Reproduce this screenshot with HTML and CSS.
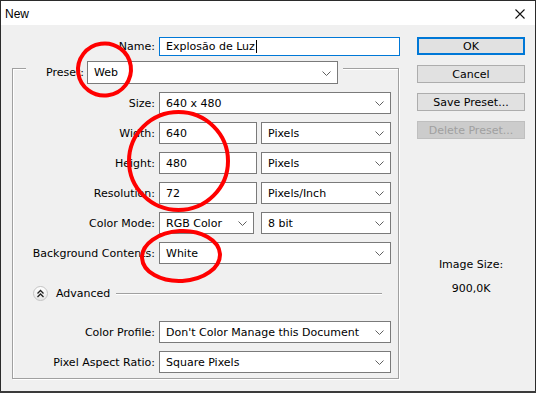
FILE: index.html
```html
<!DOCTYPE html>
<html lang="pt">
<head>
  <meta charset="UTF-8">
  <title>New</title>
  <link rel="stylesheet" href="styles.css">
</head>
<body>

  <div class="window">
    <div class="titlebar">
      <span class="title">New</span>
      <svg class="close" width="10" height="10" viewBox="0 0 10 10">
        <path d="M0.5 0.5 L9.5 9.5 M9.5 0.5 L0.5 9.5" stroke="#111" stroke-width="1.1" fill="none"/>
      </svg>
    </div>

    <div class="content">
      <div class="main">
        <div class="name-row">
          <label class="label">Name:</label>
          <div class="field name-field">Explosão de Luz<span class="caret"></span></div>
        </div>

        <div class="group">
          <div class="preset-row">
            <label class="preset-label">Preset:</label>
            <div class="select preset-select"><span>Web</span><svg class="chev" width="9" height="5"><polyline points="0.5,0.5 4.5,4.5 8.5,0.5"/></svg></div>
          </div>

          <div class="row">
            <label class="label">Size:</label>
            <div class="select wide"><span>640 x 480</span><svg class="chev" width="9" height="5"><polyline points="0.5,0.5 4.5,4.5 8.5,0.5"/></svg></div>
          </div>

          <div class="row">
            <label class="label">Width:</label>
            <div class="field num">640</div>
            <div class="select unit"><span>Pixels</span><svg class="chev" width="9" height="5"><polyline points="0.5,0.5 4.5,4.5 8.5,0.5"/></svg></div>
          </div>

          <div class="row">
            <label class="label">Height:</label>
            <div class="field num">480</div>
            <div class="select unit"><span>Pixels</span><svg class="chev" width="9" height="5"><polyline points="0.5,0.5 4.5,4.5 8.5,0.5"/></svg></div>
          </div>

          <div class="row">
            <label class="label">Resolution:</label>
            <div class="field num">72</div>
            <div class="select unit"><span>Pixels/Inch</span><svg class="chev" width="9" height="5"><polyline points="0.5,0.5 4.5,4.5 8.5,0.5"/></svg></div>
          </div>

          <div class="row">
            <label class="label">Color Mode:</label>
            <div class="select mode"><span>RGB Color</span><svg class="chev" width="9" height="5"><polyline points="0.5,0.5 4.5,4.5 8.5,0.5"/></svg></div>
            <div class="select unit"><span>8 bit</span><svg class="chev" width="9" height="5"><polyline points="0.5,0.5 4.5,4.5 8.5,0.5"/></svg></div>
          </div>

          <div class="row">
            <label class="label">Background Contents:</label>
            <div class="select wide"><span>White</span><svg class="chev" width="9" height="5"><polyline points="0.5,0.5 4.5,4.5 8.5,0.5"/></svg></div>
          </div>

          <div class="advanced-row">
            <div class="toggle">
              <svg width="9" height="9" viewBox="0 0 9 9">
                <polyline points="1.5,4.5 4.5,1.5 7.5,4.5" />
                <polyline points="1.5,8 4.5,5 7.5,8" />
              </svg>
            </div>
            <span class="advanced-text">Advanced</span>
            <div class="advanced-line"></div>
          </div>

          <div class="row profile">
            <label class="label">Color Profile:</label>
            <div class="select wide"><span>Don't Color Manage this Document</span><svg class="chev" width="9" height="5"><polyline points="0.5,0.5 4.5,4.5 8.5,0.5"/></svg></div>
          </div>

          <div class="row">
            <label class="label">Pixel Aspect Ratio:</label>
            <div class="select wide"><span>Square Pixels</span><svg class="chev" width="9" height="5"><polyline points="0.5,0.5 4.5,4.5 8.5,0.5"/></svg></div>
          </div>
        </div>
      </div>

      <div class="side">
        <button class="btn default">OK</button>
        <button class="btn">Cancel</button>
        <button class="btn">Save Preset...</button>
        <button class="btn" disabled>Delete Preset...</button>

        <div class="image-size">Image Size:</div>
        <div class="image-value">900,0K</div>
      </div>
    </div>

    <!-- red marker circles drawn on top of the screenshot -->
    <svg class="marks" width="536" height="393">
      <ellipse cx="104.5" cy="69.5" rx="26.5" ry="26" transform="rotate(-8 104.5 69.5)"/>
      <ellipse cx="178.5" cy="161" rx="49.5" ry="49"/>
      <ellipse cx="181" cy="256" rx="39" ry="25" transform="rotate(-3 181 256)"/>
    </svg>
  </div>

</body>
</html>
```

FILE: styles.css
```css
body {
  margin: 0;
  background: #3b3b3b;
  font-family: "DejaVu Sans", sans-serif;
  font-size: 11px;
  color: #000;
  width: 536px;
  height: 393px;
  overflow: hidden;
}

.window {
  position: relative;
  width: 536px;
  height: 391px;
  box-sizing: border-box;
  border: 1px solid #2b2b2b;
  border-bottom: none;
  background: #f0f0f0;
}

.titlebar {
  height: 24px;
  background: #fff;
  display: flex;
  align-items: center;
  justify-content: space-between;
  padding: 0 10px 0 4px;
  font-family: "Liberation Sans", sans-serif;
  font-size: 12px;
}

.title {
  padding-top: 1px;
}

.close {
  margin-top: 2px;
}

.content {
  display: flex;
  padding-top: 12px;
}

.main {
  width: 388px;
  margin-left: 11px;
}

/* labels and fields */
.label {
  width: 142px;
  margin-right: 4px;
  text-align: right;
  white-space: nowrap;
  flex: none;
}

.name-row {
  display: flex;
  align-items: center;
  height: 19px;
}

.name-row .label {
  width: 143px;
}

.field,
.select {
  box-sizing: border-box;
  background: #fff;
  border: 1px solid #7a7a7a;
  display: flex;
  align-items: center;
  padding-left: 6px;
  height: 22px;
  white-space: nowrap;
}

.name-field {
  width: 242px;
  height: 19px;
  border-color: #0078d7;
}

.caret {
  width: 1px;
  height: 13px;
  background: #000;
  margin-left: 1px;
}

.select {
  justify-content: space-between;
  padding-right: 6px;
}

.chev {
  flex: none;
  margin-top: 1px;
}

.chev polyline {
  fill: none;
  stroke: #606060;
  stroke-width: 1;
}

/* group box */
.group {
  box-sizing: border-box;
  width: 387px;
  margin-top: 12px;
  height: 311px;
  border: 1px solid #a0a0a0;
  box-shadow: 1px 1px 0 #fff, inset 1px 1px 0 #fff;
}

.preset-row {
  display: flex;
  align-items: center;
  width: 317px;
  margin: -8px 0 0 13px;
  background: #f0f0f0;
}

.preset-label {
  width: 58px;
  text-align: right;
  margin-right: 3px;
}

.preset-select {
  width: 251px;
  height: 23px;
}

.row {
  display: flex;
  align-items: center;
  margin-top: 8px;
}

.wide {
  width: 232px;
}

.num {
  width: 98px;
}

.mode {
  width: 95px;
}

.unit {
  width: 130px;
  margin-left: 4px;
}

.row .mode + .unit {
  margin-left: 7px;
}

/* advanced */
.advanced-row {
  display: flex;
  align-items: center;
  height: 16px;
  margin-top: 21px;
}

.toggle {
  box-sizing: border-box;
  width: 15px;
  height: 15px;
  margin-left: 20px;
  border-radius: 50%;
  border: 1px solid #c4c4c4;
  background: linear-gradient(#ffffff, #e6e6e6);
  display: flex;
  align-items: center;
  justify-content: center;
}

.toggle polyline {
  fill: none;
  stroke: #222;
  stroke-width: 1.3;
}

.advanced-text {
  margin-left: 8px;
}

.advanced-line {
  flex: 1;
  height: 1px;
  margin: 0 16px 0 6px;
  background: #a0a0a0;
  box-shadow: 0 1px 0 #fff;
}

.row.profile {
  margin-top: 20px;
}

/* right column */
.side {
  width: 108px;
  margin-left: 17px;
  display: flex;
  flex-direction: column;
  align-items: stretch;
}

.btn {
  height: 18px;
  margin: 0 0 10px 0;
  padding: 0;
  border: 1px solid #adadad;
  background: #e1e1e1;
  font-family: "DejaVu Sans", sans-serif;
  font-size: 11px;
  color: #000;
}

.btn.default {
  border-color: #0078d7;
  box-shadow: inset 0 0 0 1px #0078d7;
}

.btn:disabled {
  color: #a0a0a0;
  background: #cccccc;
  border-color: #bfbfbf;
}

.image-size,
.image-value {
  text-align: center;
  line-height: 14px;
}

.image-size {
  margin-top: 109px;
}

.image-value {
  margin-top: 10px;
}

/* annotation overlay */
.marks {
  position: absolute;
  left: -1px;
  top: -1px;
  pointer-events: none;
}

.marks ellipse {
  fill: none;
  stroke: #ff0000;
  stroke-width: 4;
}
```
